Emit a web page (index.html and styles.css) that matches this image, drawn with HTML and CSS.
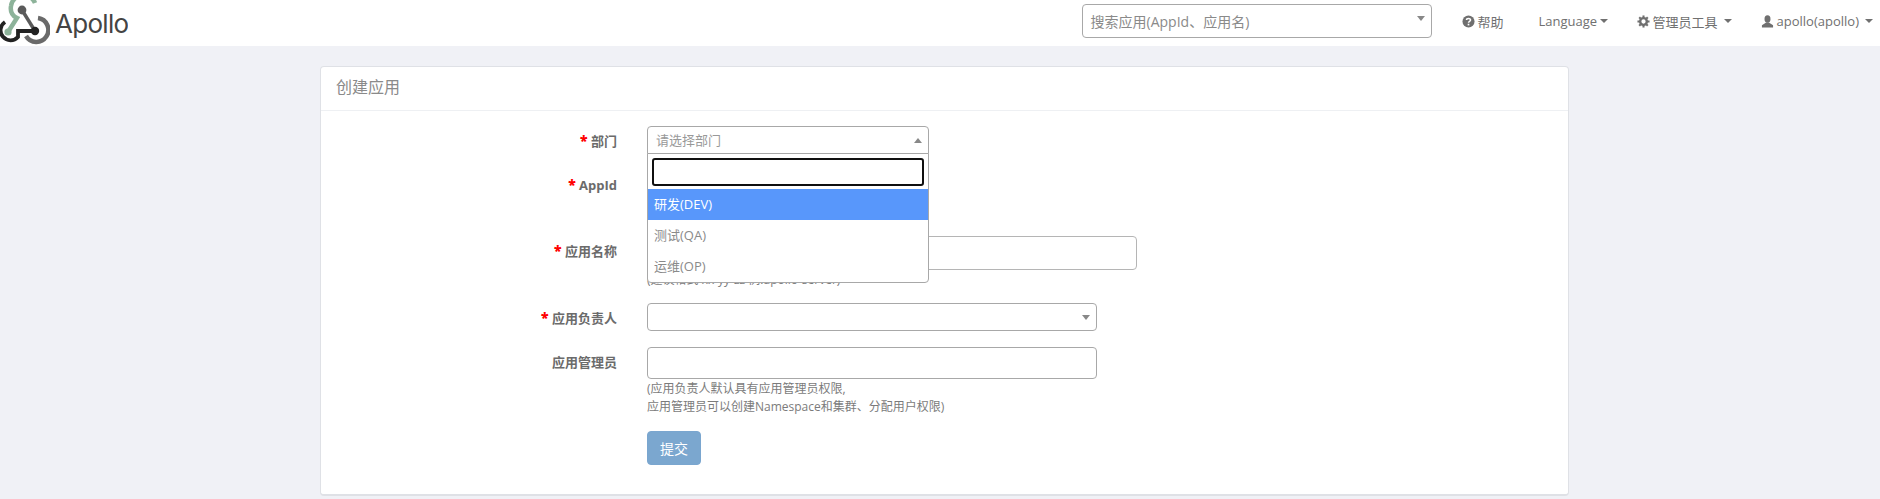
FILE: index.html
```html
<!DOCTYPE html>
<html lang="zh">
<head>
<meta charset="utf-8">
<title>Apollo</title>
<link rel="stylesheet" href="styles.css">
</head>
<body>
<header class="nav">
  <a class="brand">
    <svg class="logo" viewBox="0 0 50 46" width="50" height="46">
      <path d="M35 3 A12.5 12.5 0 0 0 11 6 C10 12 13 16 17 18 L8 32" fill="none" stroke="#8db39a" stroke-width="4.5"/>
      <circle cx="8" cy="32" r="3.6" fill="#8db39a"/>
      <path d="M22 10 L35 31" fill="none" stroke="#5a5a5a" stroke-width="3.4"/>
      <circle cx="22" cy="10" r="4.4" fill="#5a5a5a"/>
      <path d="M38 18 A12 12 0 1 1 26 36" fill="none" stroke="#6a6a6a" stroke-width="4.5"/>
      <path d="M5 22 A10 10 0 1 0 18 37 L18 31 H35" fill="none" stroke="#222" stroke-width="3.8"/>
      <circle cx="35" cy="31" r="4.2" fill="#222"/>
    </svg>
    <span class="brand-name">Apollo</span>
  </a>
  <div class="nav-right">
    <div class="nav-search">
      <span>搜索应用(AppId、应用名)</span>
      <i class="caret-down grey"></i>
    </div>
    <a class="nav-link help-link">
      <svg class="ico" viewBox="0 0 14 14" width="13" height="13"><circle cx="7" cy="7" r="6.5" fill="#6f6f6f"/><path d="M4.8 5.4 C4.9 3.2 9.2 3.2 9.2 5.4 C9.2 7 7 6.8 7 8.4" fill="none" stroke="#fff" stroke-width="1.6"/><rect x="6.1" y="9.4" width="1.8" height="1.8" fill="#fff"/></svg>
      帮助
    </a>
    <a class="nav-link lang-link">Language<i class="caret-down"></i></a>
    <a class="nav-link tools-link">
      <svg class="ico" viewBox="0 0 14 14" width="13" height="13"><circle cx="7" cy="7" r="3.6" fill="none" stroke="#6f6f6f" stroke-width="2.6"/><g stroke="#6f6f6f" stroke-width="2.2"><path d="M7 0.5V3"/><path d="M7 11V13.5"/><path d="M0.5 7H3"/><path d="M11 7H13.5"/><path d="M2.4 2.4L4 4"/><path d="M10 10L11.6 11.6"/><path d="M2.4 11.6L4 10"/><path d="M10 4L11.6 2.4"/></g></svg>
      管理员工具<i class="caret-down wide"></i>
    </a>
    <a class="nav-link user-link">
      <svg class="ico" viewBox="0 0 14 14" width="13" height="13"><ellipse cx="7" cy="4.4" rx="3.2" ry="4" fill="#6f6f6f"/><path d="M5.5 8 L1 11 V13.5 H13 V11 L8.5 8Z" fill="#6f6f6f"/></svg>
      apollo(apollo)<i class="caret-down wide"></i>
    </a>
  </div>
</header>

<main class="panel">
  <h1 class="panel-title">创建应用</h1>
  <form class="form">
    <div class="row row-dept">
      <label class="lbl"><b class="req">*</b> 部门</label>
      <div class="ctl">
        <div class="picker open">
          <span class="ph">请选择部门</span>
          <i class="caret-up"></i>
        </div>
        <div class="dropdown">
          <div class="dd-search"><div class="dd-input"></div></div>
          <ul class="dd-list">
            <li class="active">研发(DEV)</li>
            <li>测试(QA)</li>
            <li>运维(OP)</li>
          </ul>
        </div>
      </div>
    </div>
    <div class="row row-appid">
      <label class="lbl"><b class="req">*</b> AppId</label>
      <div class="ctl"><div class="input w-appid"></div></div>
    </div>
    <div class="row row-name">
      <label class="lbl"><b class="req">*</b> 应用名称</label>
      <div class="ctl">
        <div class="input w-name"></div>
        <small class="hint peek">(建议格式 xx-yy-zz 例:apollo-server)</small>
      </div>
    </div>
    <div class="row row-owner">
      <label class="lbl"><b class="req">*</b> 应用负责人</label>
      <div class="ctl">
        <div class="picker w-450"><i class="caret-down grey"></i></div>
      </div>
    </div>
    <div class="row row-admin">
      <label class="lbl">应用管理员</label>
      <div class="ctl">
        <div class="input w-450 h-admin"></div>
        <small class="hint">(应用负责人默认具有应用管理员权限,<br>应用管理员可以创建Namespace和集群、分配用户权限)</small>
      </div>
    </div>
    <div class="row row-submit">
      <div class="lbl"></div>
      <div class="ctl"><button type="button" class="submit">提交</button></div>
    </div>
  </form>
</main>
</body>
</html>
```
FILE: styles.css
```css
* { box-sizing: border-box; }
html, body { margin: 0; padding: 0; }
body {
  background: #f0f1f6;
  font-family: "Open Sans", "Noto Sans CJK SC", sans-serif;
  font-size: 13px;
  color: #797979;
  height: 499px;
  overflow: hidden;
}
.nav {
  height: 46px;
  background: #fff;
  display: flex;
  justify-content: space-between;
  align-items: center;
}
.brand { display: flex; align-items: center; height: 46px; overflow: hidden; }
.logo { display: block; flex: none; }
.brand-name {
  font-family: "Inter", sans-serif;
  font-size: 26px;
  color: #444;
  margin-left: 5px;
  margin-top: 0;
  letter-spacing: -0.7px;
}
.nav-right { display: flex; align-items: center; height: 46px; padding-right: 7px; }
.nav-search {
  width: 350px;
  height: 34px;
  border: 1px solid #a8a8a8;
  border-radius: 4px;
  display: flex;
  justify-content: space-between;
  align-items: center;
  padding: 0 6px 0 8px;
  font-size: 14px;
  color: #8a8a8a;
  margin-right: 30px;
  margin-top: -4px;
}
.nav-search .caret-down { margin: -6px 0 0 0; }
.nav-link { display: flex; align-items: center; white-space: nowrap; color: #707070; margin-top: -4px; }
.ico { margin-right: 3px; flex: none; }
.help-link { width: 77px; }
.lang-link { width: 98px; }
.tools-link { width: 124px; }
.caret-down, .caret-up { display: inline-block; width: 0; height: 0; border-left: 4px solid transparent; border-right: 4px solid transparent; }
.caret-down { border-top: 4px solid #707070; margin-left: 3px; }
.caret-down.wide { margin-left: 6px; }
.caret-down.grey { border-top: 5px solid #888; }
.caret-up { border-bottom: 5px solid #888; }

.panel {
  width: 1249px;
  height: 430px;
  margin: 20px 0 0 320px;
  background: #fff;
  border: 1px solid #dfe1e6;
  border-bottom: 2px solid #dfe1e6;
  border-radius: 4px;
}
.panel-title {
  margin: 0;
  height: 44px;
  padding: 0 15px;
  line-height: 40px;
  font-size: 16px;
  font-weight: 400;
  color: #8a8a8a;
  border-bottom: 1px solid #eef0f3;
}
.form { display: flex; flex-direction: column; padding-top: 15px; }
.row { display: grid; grid-template-columns: 296px 1fr; column-gap: 30px; }
.lbl { text-align: right; font-weight: 700; color: #6b6b6b; line-height: 28px; padding-top: 1px; white-space: nowrap; }
.req { color: #f00; font-size: 14px; }
.ctl { position: relative; }

.picker {
  width: 282px;
  height: 28px;
  border: 1px solid #a8a8a8;
  border-radius: 4px;
  background: #fff;
  display: flex;
  justify-content: space-between;
  align-items: center;
  padding: 0 6px 0 8px;
}
.picker.open { border-radius: 4px 4px 0 0; }
.picker.w-450 { width: 450px; justify-content: flex-end; }
.ph { color: #999; margin-top: -2px; }
.dropdown {
  position: absolute;
  left: 0;
  top: 27px;
  z-index: 5;
  width: 282px;
  background: #fff;
  border: 1px solid #a8a8a8;
  border-radius: 0 0 4px 4px;
}
.dd-search { padding: 4px 4px 3px; }
.dd-input { height: 28px; border: 2px solid #101010; border-radius: 3px; }
.dd-list { list-style: none; margin: 0; padding: 0; font-size: 13px; }
.dd-list li { height: 31px; line-height: 31px; padding-left: 6px; color: #8a8a8a; }
.dd-list li.active { background: #5897fb; color: #fff; }

.input { border: 1px solid #b5b5b5; border-radius: 4px; height: 34px; background: #fff; }
.w-appid { width: 260px; }
.w-name { width: 490px; }
.w-450 { width: 450px; }
.h-admin { height: 32px; border-color: #a8a8a8; }
.hint { display: block; font-size: 12px; line-height: 18px; color: #7b7b7b; margin-top: 1px; }
.peek { margin-top: 1px; }
.row-appid { margin-top: 15px; }
.row-name { margin-top: 32px; }
.row-owner { margin-top: 14px; }
.row-admin { margin-top: 15px; }
.row-submit { margin-top: 15px; }
.row-admin .lbl { line-height: 28px; }
.submit {
  width: 54px;
  height: 34px;
  border: 1px solid #7aa6cf;
  border-radius: 4px;
  background: #7ba7cf;
  color: #fff;
  font: inherit;
  font-size: 14px;
  padding: 0;
}
```
